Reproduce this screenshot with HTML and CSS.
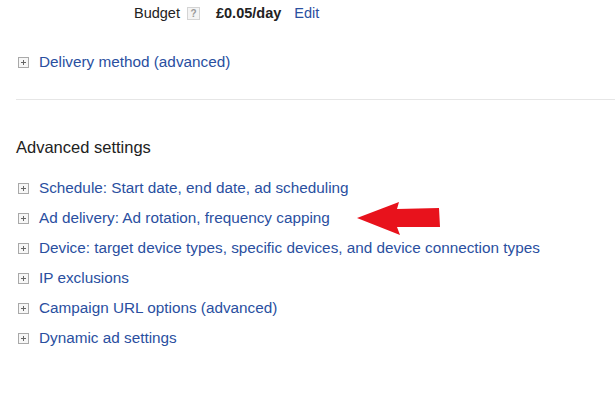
FILE: index.html
```html
<!DOCTYPE html>
<html lang="en">
<head>
  <meta charset="UTF-8" />
  <title>Campaign settings</title>
  <link rel="stylesheet" href="styles.css">
</head>
<body>
  <div class="budget-row">
    <span class="budget-label">Budget</span>
    <span class="help-icon">?</span>
    <span class="budget-value">£0.05/day</span>
    <a href="#" class="link">Edit</a>
  </div>

  <div class="toggle-list top-list">
    <a href="#" class="toggle"><span class="plus"></span>Delivery method (advanced)</a>
  </div>

  <hr class="divider" />

  <h2 class="section-title">Advanced settings</h2>

  <div class="toggle-list">
    <a href="#" class="toggle"><span class="plus"></span>Schedule: Start date, end date, ad scheduling</a>
    <div class="toggle-row">
      <a href="#" class="toggle"><span class="plus"></span>Ad delivery: Ad rotation, frequency capping</a>
      <svg class="arrow" width="84" height="36" viewBox="0 0 84 36">
        <polygon points="0,17 42,1 40,8 82,7 83,26 40,26 43,34" fill="#e8121c" />
      </svg>
    </div>
    <a href="#" class="toggle"><span class="plus"></span>Device: target device types, specific devices, and device connection types</a>
    <a href="#" class="toggle"><span class="plus"></span>IP exclusions</a>
    <a href="#" class="toggle"><span class="plus"></span>Campaign URL options (advanced)</a>
    <a href="#" class="toggle"><span class="plus"></span>Dynamic ad settings</a>
  </div>
</body>
</html>
```

FILE: styles.css
```css
:root {
  --link-color: #2a4f9f;
  --text-color: #333333;
  --border-light: #e6e6e6;
}

* {
  box-sizing: border-box;
  margin: 0;
  padding: 0;
}

body {
  font-family: "Liberation Sans", Arial, sans-serif;
  font-size: 15.3px;
  color: var(--text-color);
  background: #ffffff;
}

.budget-row {
  display: flex;
  align-items: center;
  height: 26px;
  padding-left: 134px;
  font-size: 14.5px;
}

.budget-label {
  color: #222;
}

.help-icon {
  display: inline-flex;
  align-items: center;
  justify-content: center;
  width: 13px;
  height: 13px;
  margin-left: 7px;
  border: 1px solid #d4d4d4;
  background: #f4f4f4;
  color: #9a9a9a;
  font-size: 10px;
  font-weight: bold;
}

.budget-value {
  margin-left: 16px;
  font-weight: bold;
  color: #222;
}

.link {
  margin-left: 13px;
  color: var(--link-color);
  text-decoration: none;
}

.toggle-list {
  display: flex;
  flex-direction: column;
  padding-left: 18px;
}

.top-list {
  margin-top: 21px;
}

.toggle {
  display: flex;
  align-items: center;
  height: 30px;
  color: var(--link-color);
  text-decoration: none;
}

.toggle-row {
  position: relative;
}

.arrow {
  position: absolute;
  left: 339px;
  top: -2px;
}

.plus {
  position: relative;
  width: 11px;
  height: 11px;
  margin-right: 10px;
  border: 1px solid #a9a9a9;
  background: #f7f7f7;
}

.plus::before,
.plus::after {
  content: "";
  position: absolute;
  background: #666;
}

.plus::before {
  left: 2px;
  top: 4px;
  width: 5px;
  height: 1px;
}

.plus::after {
  left: 4px;
  top: 2px;
  width: 1px;
  height: 5px;
}

.divider {
  border: 0;
  border-top: 1px solid var(--border-light);
  margin: 22px 0 0 16px;
}

.section-title {
  font-size: 16.5px;
  font-weight: normal;
  color: #222;
  margin: 38px 0 16px 16px;
}
```
